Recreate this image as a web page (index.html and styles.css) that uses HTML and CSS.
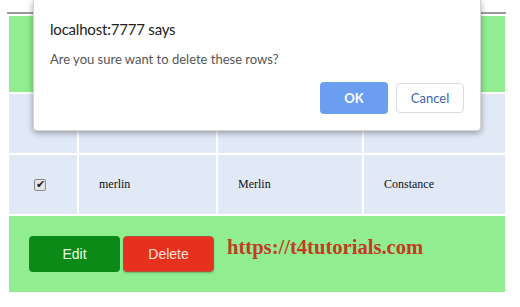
FILE: index.html
```html
<!DOCTYPE html>
<html lang="en">
<head>
    <meta charset="UTF-8">
    <title>Delete rows</title>
    <link rel="stylesheet" href="styles.css">
</head>
<body>
    <div class="page">
        <div class="rule"></div>
        <div class="grid">
            <div class="row head">
                <div class="cell"></div><div class="cell"></div><div class="cell"></div><div class="cell"></div>
            </div>
            <div class="row">
                <div class="cell"></div><div class="cell"></div><div class="cell"></div><div class="cell"></div>
            </div>
            <div class="row">
                <div class="cell"><input type="checkbox" class="chk" checked></div>
                <div class="cell">merlin</div>
                <div class="cell">Merlin</div>
                <div class="cell">Constance</div>
            </div>
            <div class="foot">
                <button class="btn edit">Edit</button>
                <button class="btn delete">Delete</button>
                <span class="site">https://t4tutorials.com</span>
            </div>
        </div>
    </div>

    <!-- confirm() dialog -->
    <div class="dialog">
        <div class="dlg-title">localhost:7777 says</div>
        <div class="dlg-msg">Are you sure want to delete these rows?</div>
        <div class="dlg-actions">
            <button class="dlg-btn ok">OK</button>
            <button class="dlg-btn cancel">Cancel</button>
        </div>
    </div>
</body>
</html>
```

FILE: styles.css
```css
html, body {
    margin: 0; padding: 0;
    background: #fff;
    font-family: "Liberation Serif", serif;
}
.page {
    padding: 12px 15px 0 9px;
    width: 496px;
}
.rule {
    height: 2px; background: #9a9a9a;
    margin: 0 -1px 2px -2px;
}
.grid { display: flex; flex-direction: column; gap: 2px; }
.row {
    display: grid;
    grid-template-columns: 68px 137px 144px 141px;
    gap: 2px;
    height: 59px;
}
.row.head { height: 76px; }
.row.head .cell { background: #90ee90; }
.cell {
    background: #e1e9f7;
    display: flex; align-items: center;
    padding: 0 20px;
    font-size: 12px; color: #111;
}
.chk {
    appearance: none; -webkit-appearance: none;
    width: 12px; height: 12px;
    margin: 0 0 0 5px;
    border: 1px solid #8a8a8a; border-radius: 2px;
    background: #e4e4e4;
    position: relative;
}
.chk:checked::after {
    content: "\2714";
    position: absolute; left: 1px; top: -2px;
    font-size: 11px; color: #222;
    font-family: "DejaVu Sans", sans-serif;
}
.foot {
    height: 76px;
    background: #90ee90;
    display: flex; align-items: flex-start;
    padding: 20px 20px 0;
    box-sizing: border-box;
}
.btn {
    width: 91px; height: 36px;
    border: none; border-radius: 4px;
    font-family: "Liberation Sans", Arial, sans-serif;
    font-size: 14px;
    cursor: pointer;
}
.edit { background: #0c8a17; color: #e9ffe9; }
.delete {
    margin-left: 3px;
    background: #e6311f; color: #ffe0d8;
    border: 1px solid #b5503f;
    box-shadow: 0 1px 2px rgba(0,0,0,0.25);
}
.site {
    margin: 0 0 0 13px;
    font-family: "Liberation Serif", serif;
    font-weight: bold; font-size: 20.6px;
    color: #c23b22;
}
/* confirm dialog */
.dialog {
    position: absolute; left: 33px; top: 0;
    width: 448px; height: 131px;
    box-sizing: border-box;
    background: #fff;
    border: 1px solid #d4d4d4; border-top: none;
    border-radius: 0 0 4px 4px;
    box-shadow: 0 2px 6px rgba(0,0,0,0.35);
    padding: 20px 16px 16px;
    font-family: Lato, "Open Sans", sans-serif;
    display: flex; flex-direction: column;
}
.dlg-title { font-size: 15px; letter-spacing: -0.2px; color: #222; }
.dlg-msg { font-size: 13px; color: #555; margin-top: 13px; }
.dlg-actions {
    margin-top: auto;
    display: flex; justify-content: flex-end; gap: 8px;
    align-items: center;
}
.dlg-btn {
    width: 68px; height: 32px;
    border-radius: 4px;
    font-family: Lato, "Open Sans", sans-serif;
    font-size: 13px;
}
.ok { background: #6b9ef1; color: #fff; border: none; font-weight: bold; }
.cancel {
    height: 30px;
    background: #fff; color: #3a66b4;
    border: 1px solid #dcdcdc;
}
```
